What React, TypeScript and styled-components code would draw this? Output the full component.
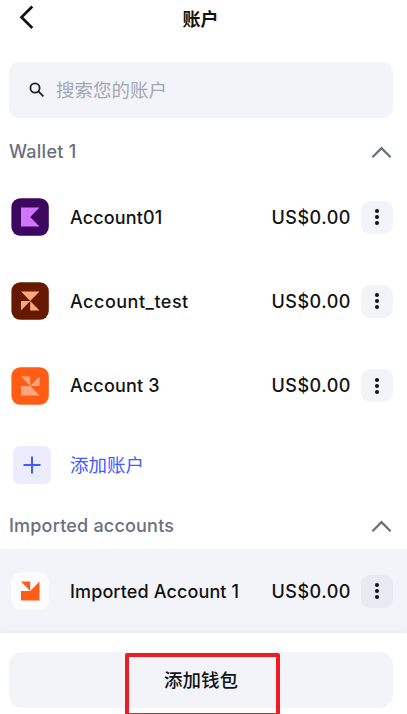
import React from "react";
import styled, { createGlobalStyle } from "styled-components";

const GlobalStyle = createGlobalStyle`
  *, *::before, *::after { box-sizing: border-box; }
  body {
    margin: 0;
    background: #fff;
    color: #121314;
    font-family: Inter, "Noto Sans CJK SC", sans-serif;
    overflow: hidden;
  }
  button, input { font: inherit; color: inherit; border: 0; padding: 0; margin: 0; }
`;

const Screen = styled.main`
  display: flex;
  flex-direction: column;
  width: 407px;
  height: 714px;
  overflow: hidden;
  background: #fff;
`;

const TopBar = styled.header`
  display: grid;
  grid-template-columns: 40px 1fr 40px;
  align-items: center;
  flex: none;
  height: 36px;
  padding: 0 6px 0 0;
`;

const BackButton = styled.button`
  display: flex;
  justify-content: flex-end;
  height: 36px;
  padding-right: 4px;
  background: none;
`;

const Title = styled.h1`
  margin: 0;
  padding-top: 3px;
  text-align: center;
  font-size: 18px;
  line-height: 26px;
  font-weight: 700;
`;

const SearchBox = styled.label`
  display: flex;
  align-items: center;
  flex: none;
  gap: 11px;
  height: 56px;
  margin: 26px 14px 10px 9px;
  padding: 0 20px;
  border-radius: 10px;
  background: #f3f4f9;
`;

const SearchInput = styled.input`
  flex: 1;
  min-width: 0;
  height: 32px;
  outline: 0;
  background: transparent;
  font-size: 18.5px;
  &::placeholder { color: #a3a6b3; opacity: 1; }
`;

const SectionHeader = styled.div<{ $height: number; $drop?: number }>`
  display: flex;
  align-items: center;
  justify-content: space-between;
  flex: none;
  height: ${(p) => p.$height}px;
  padding: ${(p) => p.$drop ?? 0}px 15px 0 9px;
`;

const SectionTitle = styled.h2<{ $tracking: number }>`
  margin: 0;
  color: #6a6f7f;
  font-size: 18px;
  line-height: 26px;
  font-weight: 500;
  letter-spacing: ${(p) => p.$tracking}px;
`;

const AccountRow = styled.div<{ $active?: boolean }>`
  display: flex;
  align-items: center;
  flex: none;
  height: 84.3px;
  padding: 0 14px 0 11px;
  background: ${(p) => (p.$active ? "#f3f4f9" : "transparent")};
`;

const AccountName = styled.span<{ $tracking: number }>`
  flex: 1;
  margin-left: 21px;
  padding-top: 1px;
  font-size: 18px;
  line-height: 26px;
  font-weight: 500;
  white-space: nowrap;
  letter-spacing: ${(p) => p.$tracking}px;
`;

const Balance = styled.span`
  width: 79px;
  margin-right: 10px;
  padding-top: 1px;
  font-size: 18px;
  line-height: 26px;
  font-weight: 500;
  white-space: nowrap;
  letter-spacing: 0.5px;
`;

const MenuButton = styled.button<{ $active?: boolean }>`
  display: flex;
  align-items: center;
  justify-content: center;
  flex: none;
  width: 32.5px;
  height: 33px;
  border-radius: 9px;
  background: ${(p) => (p.$active ? "#e8eaf2" : "#f3f4f9")};
`;

const AddRow = styled.button`
  display: flex;
  align-items: center;
  flex: none;
  gap: 19px;
  height: 73.6px;
  padding: 0 13px;
  background: none;
  color: #4459ff;
  font-size: 18.5px;
  text-align: left;
`;

const AddLabel = styled.span`
  padding-bottom: 2px;
`;

const AddTile = styled.span`
  display: flex;
  align-items: center;
  justify-content: center;
  width: 38px;
  height: 38px;
  border-radius: 7px;
  background: #ececff;
`;

const Footer = styled.footer`
  position: relative;
  flex: none;
  height: 81px;
  padding: 19px 14px 0 9px;
  background: #fff;
  box-shadow: 0 0 5px rgba(60, 65, 90, 0.09);
`;

const AddWalletButton = styled.button`
  display: block;
  width: 100%;
  height: 56px;
  padding-bottom: 2px;
  border-radius: 14px;
  background: #f3f4f9;
  font-size: 18.5px;
  font-weight: 500;
`;

const Highlight = styled.div`
  position: absolute;
  top: 20px;
  left: 125px;
  width: 155px;
  height: 64px;
  border: 4px solid #ee1c25;
  border-radius: 2px;
  pointer-events: none;
`;

const ChevronUp = () => (
  <svg width="21" height="14" viewBox="0 0 21 14" fill="none" stroke="#686e80" strokeWidth="2.2">
    <path d="M1.4 12.2 10.5 3.1l9.1 9.1" />
  </svg>
);

const Dots = () => (
  <svg width="6" height="18" viewBox="0 0 6 18" fill="#121314">
    <circle cx="3" cy="3" r="2.05" />
    <circle cx="3" cy="9" r="2.05" />
    <circle cx="3" cy="15" r="2.05" />
  </svg>
);

type AvatarProps = { bg: string; fg: string; shape: string };

const Avatar = ({ bg, fg, shape }: AvatarProps) => (
  <svg width="38" height="38" viewBox="0 0 38 38" shapeRendering="geometricPrecision">
    <rect x="0.4" y="0.2" width="37.4" height="37.6" rx="9" fill={bg} />
    <path d={shape} fill={fg} />
  </svg>
);

type Account = { name: string; tracking: number; avatar: AvatarProps };

const walletAccounts: Account[] = [
  {
    name: "Account01",
    tracking: 0.15,
    avatar: { bg: "#3d065f", fg: "#d075ff", shape: "M10 9.5H28.5L19.2 19 28.5 28.5H10Z" },
  },
  {
    name: "Account_test",
    tracking: 0.5,
    avatar: {
      bg: "#661800",
      fg: "#ffa680",
      shape: "M10 9.5H28.5L19.2 19ZM10 19H19.2L10 28.5ZM19.2 19L28.5 28.5H19.2Z",
    },
  },
  {
    name: "Account 3",
    tracking: 0.17,
    avatar: {
      bg: "#ff5c16",
      fg: "#ffa680",
      shape: "M10 9.5H19.2V19ZM19.2 19L28.5 9.5V19ZM10 19H19.2L28.5 28.5H10Z",
    },
  },
];

const importedAccount: Account = {
  name: "Imported Account 1",
  tracking: 0.12,
  avatar: {
    bg: "#fcfcfd",
    fg: "#ff5c16",
    shape: "M10 9.5H19.2V19ZM19.2 19L28.5 9.5V28.5H10V19Z",
  },
};

const AccountItem = ({ account, active }: { account: Account; active?: boolean }) => (
  <AccountRow $active={active}>
    <Avatar {...account.avatar} />
    <AccountName $tracking={account.tracking}>{account.name}</AccountName>
    <Balance>US$0.00</Balance>
    <MenuButton $active={active} aria-label="Account menu">
      <Dots />
    </MenuButton>
  </AccountRow>
);

export default function App() {
  return (
    <>
      <GlobalStyle />
      <Screen>
        <TopBar>
          <BackButton aria-label="Back">
            <svg width="18" height="36" viewBox="0 0 18 36" fill="none" stroke="#121314" strokeWidth="2.7">
              <path d="M14.3 6.5 3.5 17.2 14.3 28" strokeLinejoin="miter" />
            </svg>
          </BackButton>
          <Title>账户</Title>
        </TopBar>
        <SearchBox>
          <svg width="16" height="16" viewBox="0 0 16 16" fill="none" stroke="#222326" strokeWidth="1.8">
            <circle cx="6" cy="6" r="4.6" />
            <path d="m9.4 9.4 5 5" />
          </svg>
          <SearchInput placeholder="搜索您的账户" />
        </SearchBox>
        <SectionHeader $height={47}>
          <SectionTitle $tracking={0.25}>Wallet 1</SectionTitle>
          <ChevronUp />
        </SectionHeader>
        {walletAccounts.map((account) => (
          <AccountItem key={account.name} account={account} />
        ))}
        <AddRow>
          <AddTile>
            <svg width="18" height="18" viewBox="0 0 18 18" stroke="#4459ff" strokeWidth="2">
              <path d="M9 .5v17M.5 9h17" />
            </svg>
          </AddTile>
          <AddLabel>添加账户</AddLabel>
        </AddRow>
        <SectionHeader $height={47.5} $drop={2}>
          <SectionTitle $tracking={0.2}>Imported accounts</SectionTitle>
          <ChevronUp />
        </SectionHeader>
        <AccountItem account={importedAccount} active />
        <Footer>
          <AddWalletButton>添加钱包</AddWalletButton>
          <Highlight />
        </Footer>
      </Screen>
    </>
  );
}
